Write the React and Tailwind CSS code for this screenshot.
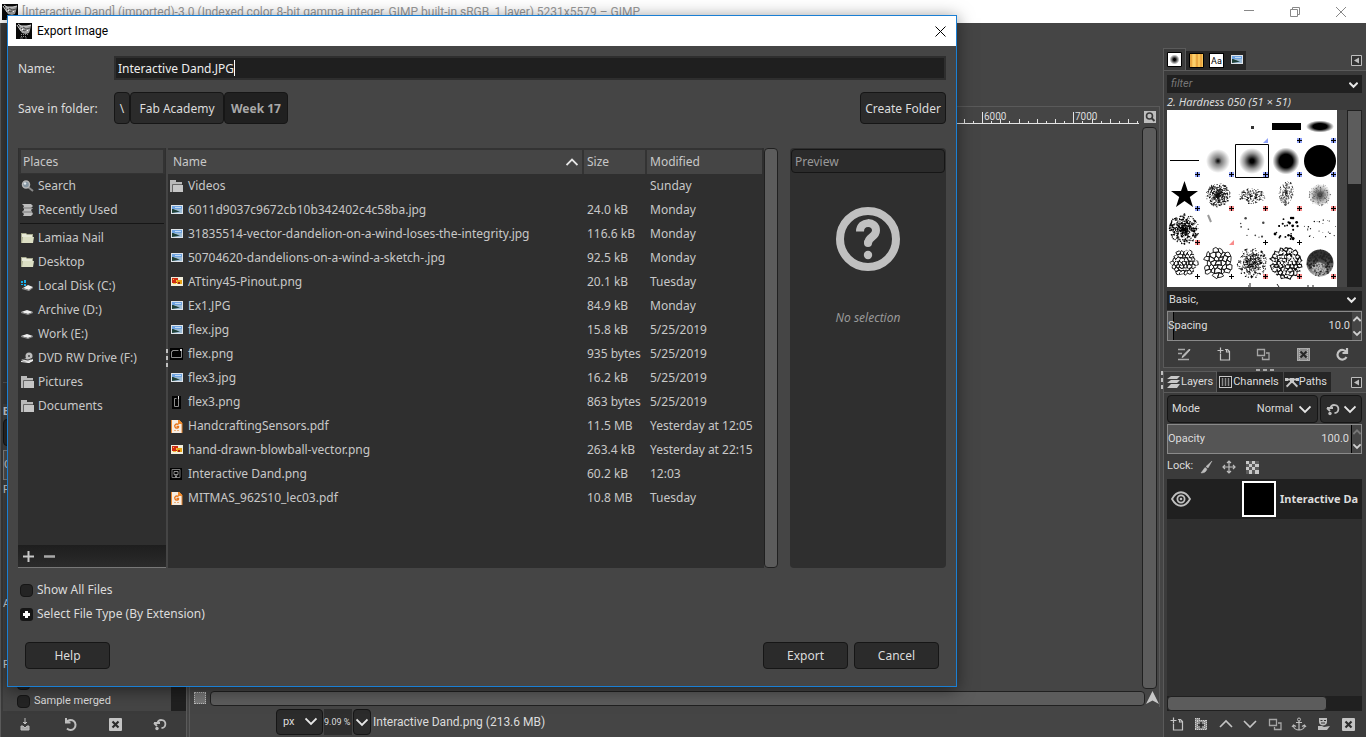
import React, { useState } from "react";

const places = [
  { name: "Search", icon: "search" },
  { name: "Recently Used", icon: "recent" },
  { name: "Lamiaa Nail", icon: "home", divider: true },
  { name: "Desktop", icon: "home" },
  { name: "Local Disk (C:)", icon: "system" },
  { name: "Archive (D:)", icon: "drive" },
  { name: "Work (E:)", icon: "drive" },
  { name: "DVD RW Drive (F:)", icon: "dvd" },
  { name: "Pictures", icon: "folder" },
  { name: "Documents", icon: "folder" },
];

const files = [
  { name: "Videos", size: "", modified: "Sunday", icon: "folder" },
  { name: "6011d9037c9672cb10b342402c4c58ba.jpg", size: "24.0 kB", modified: "Monday", icon: "jpg" },
  { name: "31835514-vector-dandelion-on-a-wind-loses-the-integrity.jpg", size: "116.6 kB", modified: "Monday", icon: "jpg" },
  { name: "50704620-dandelions-on-a-wind-a-sketch-.jpg", size: "92.5 kB", modified: "Monday", icon: "jpg" },
  { name: "ATtiny45-Pinout.png", size: "20.1 kB", modified: "Tuesday", icon: "png" },
  { name: "Ex1.JPG", size: "84.9 kB", modified: "Monday", icon: "jpg" },
  { name: "flex.jpg", size: "15.8 kB", modified: "5/25/2019", icon: "jpg" },
  { name: "flex.png", size: "935 bytes", modified: "5/25/2019", icon: "thumbWide" },
  { name: "flex3.jpg", size: "16.2 kB", modified: "5/25/2019", icon: "jpg" },
  { name: "flex3.png", size: "863 bytes", modified: "5/25/2019", icon: "thumbTall" },
  { name: "HandcraftingSensors.pdf", size: "11.5 MB", modified: "Yesterday at 12:05", icon: "pdf" },
  { name: "hand-drawn-blowball-vector.png", size: "263.4 kB", modified: "Yesterday at 22:15", icon: "png" },
  { name: "Interactive Dand.png", size: "60.2 kB", modified: "12:03", icon: "thumbDand" },
  { name: "MITMAS_962S10_lec03.pdf", size: "10.8 MB", modified: "Tuesday", icon: "pdf" },
];

const drawings = {
  search: (
    <>
      <path d="M7 7l5 4" stroke="#8a8a8a" strokeWidth="2" />
      <circle cx="5" cy="4.500" r="3.500" fill="#8494a0" stroke="#b4b4b4" strokeWidth="1.500" />
      <circle cx="4" cy="3.500" r="1.200" fill="#dfe6ea" />
    </>
  ),
  recent: (
    <>
      <path d="M1 0h9l2 2-2 2H2l1-2zM3 4h9l-2 2 1 2H1l2-2zM1 8h10l1 2-2 2H2l1-2z" fill="#bdbdbd" />
      <path d="M2 4h9M2 8h9" stroke="#777" />
    </>
  ),
  home: (
    <>
      <path d="M0 1h5l1 1h6v9H0z" fill="#a9ac90" />
      <path d="M1 2h4l1 1h5v2H1z" fill="#e8ead8" />
      <path d="M2 5h11l-1 6H1z" fill="#dcdfc4" />
    </>
  ),
  drive: (
    <>
      <path d="M0 8l6-2 6 2-5 2z" fill="#f0f0f0" />
      <path d="M0 8l7 2 5-2v1l-5 2-7-2z" fill="#8e8e8e" />
    </>
  ),
  system: (
    <>
      <path d="M2 8l5-3 5 2-4 3z" fill="#f0f0f0" />
      <path d="M1 8l7 2 4-3v1l-4 3-7-2z" fill="#9a9a9a" />
      <path d="M0 1h2v2H0zM3 0h2v3H3zM0 4h2v1H0zM3 4h2v2H3z" fill="#18aeea" />
    </>
  ),
  dvd: (
    <>
      <path d="M0 8l6-2 6 2-4 3z" fill="#dcdcdc" />
      <circle cx="8" cy="4" r="3.500" fill="#bdbdbd" />
      <circle cx="8" cy="4" r="1" fill="#444" />
      <path d="M2 7l5 1 5-2" stroke="#3a3a3a" fill="none" />
      <path d="M0 9l8 1 4-3v2l-4 2-8-1z" fill="#efefef" />
    </>
  ),
  folder: (
    <>
      <path d="M0 0h6v2h6v10H0z" fill="#b9b9b9" />
      <path d="M2.500 12V4.500H12" stroke="#666" fill="none" />
      <path d="M4 5h9v7H3V6z" fill="#c6c6c6" />
    </>
  ),
  jpg: (
    <>
      <path d="M1 1h12v9H1z" fill="#dfe4e9" />
      <path d="M2 2h10v3H2z" fill="#6fa4e2" />
      <path d="M5 3h6v1H5z" fill="#c4dcf5" />
      <path d="M2 5h10v4H2z" fill="#9cbbd6" />
      <path d="M2 5c3 0 4 2 8 2l-2 1-6 1z" fill="#1f4038" />
    </>
  ),
  png: (
    <>
      <path d="M1 1h12v9H1z" fill="#f2eedb" />
      <path d="M2 2h6v5H2z" fill="#cf2b14" />
      <path d="M7 4h5v4H7z" fill="#e8a315" />
      <path d="M3 3h1v1H3zM6 4h1v2H6zM3 7h3v1H3z" fill="#f3c23c" />
      <path d="M8 6h2v2H8z" fill="#9d2710" />
    </>
  ),
  thumbWide: (
    <>
      <path d="M0 0h13v12H0z" fill="#020202" />
      <path d="M11.500 1v8.500h-10v-6h1v-1h6" stroke="#8c8c8c" fill="none" />
      <path d="M10 1h2v2h-2z" fill="#d8d8d8" />
    </>
  ),
  thumbTall: (
    <>
      <path d="M2 0h9v13H2z" fill="#020202" />
      <path d="M8.500 1v9.500h-4v-8h2" stroke="#8c8c8c" fill="none" />
      <path d="M8 0h1v3H8z" fill="#ddd" />
    </>
  ),
  thumbDand: (
    <>
      <path d="M0 0h12v12H0z" fill="#020202" />
      <path d="M2 1.500h8v8H2z" stroke="#777" fill="none" />
      <path d="M4 3.500h4v3H4zM5 7l1 3 1-3" stroke="#8f8f8f" fill="none" />
    </>
  ),
  pdf: (
    <>
      <path d="M1 0h8l3 3v10H1z" fill="#f7ede2" />
      <path d="M1.500 0v13M9 0l3 3v10" stroke="#e4832c" fill="none" />
      <path d="M8 0h1l3 3v1H8z" fill="#ee8a2c" />
      <path d="M8.500 4.500C6 3 4 5 5 7s4 1 3.500-.500H6.500" stroke="#e8741a" strokeWidth="1.400" fill="none" />
      <path d="M4 10.500h6" stroke="#eeb077" strokeDasharray="2 1" />
    </>
  ),
};

function FileIcon({ name }) {
  return (
    <svg width="14" height="13" viewBox="0 0 14 13" className="shrink-0" aria-hidden="true">
      {drawings[name]}
    </svg>
  );
}

function Chevron({ up, size = 12, color = "#e6e6e6", className = "" }) {
  return (
    <svg width={size} height={size} viewBox="0 0 12 12" className={className} aria-hidden="true">
      <path
        d={up ? "M0.500 9L6 3.500 11.500 9" : "M0.500 3.500L6 9l5.500-5.500"}
        fill="none"
        stroke={color}
        strokeWidth={size < 10 ? 2.8 : 1.8}
      />
    </svg>
  );
}

function WilberIcon() {
  return (
    <svg width="16" height="16" viewBox="0 0 16 16" className="shrink-0" aria-hidden="true">
      <path d="M0 0h16v16H0z" fill="#080808" />
      <path d="M3 2l3 1 4 0 5-1-1 5-1 3-3 1-4-1-2-3z" fill="#a4a4a4" />
      <path d="M1 2l2 3 2 3M2 1l3 2h6l4-1" stroke="#d8d8d8" fill="none" />
      <path d="M5 5l3 3 2-1M7 4l3 2 4-1" stroke="#4a4a4a" fill="none" />
      <path d="M6 6h1v1H6zM11 7h1v1h-1z" fill="#fff" />
      <path d="M5 11.500h7M5 13.500h6" stroke="#8a8a8a" strokeDasharray="1 1" />
      <path d="M4 15h3M9 15h2" stroke="#666" />
    </svg>
  );
}

const glyphs = {
  save: <path d="M7 1v6M5 5l2 2 2-2M3 9v4h8V9H9L7 11 5 9z" fill="#a8a8a8" stroke="#bebebe" />,
  undo: <path d="M3 1v4.500h4.500M3.500 5A5 5 0 1 1 4 11.500" fill="none" stroke="#bebebe" strokeWidth="2" />,
  reset: (
    <>
      <path d="M4.500 6a4 4 0 1 1 4 5M1 6h6M4 9L1 6" fill="none" stroke="#bebebe" strokeWidth="1.800" />
      <circle cx="4" cy="11.500" r="1.700" fill="#bebebe" />
    </>
  ),
  remove: (
    <>
      <rect x="1" y="1" width="13" height="13" rx="1" fill="#c4c4c4" />
      <path d="M4.500 4.500l6 6M10.500 4.500l-6 6" stroke="#2c2c2c" strokeWidth="2.200" />
    </>
  ),
  removeDim: (
    <>
      <rect x="1" y="1" width="13" height="13" fill="#8c8c8c" />
      <rect x="1.500" y="1.500" width="12" height="12" fill="none" stroke="#c9c9c9" strokeDasharray="1 1" />
      <path d="M3.500 2v11M11.500 2v11" stroke="#b4b4b4" strokeDasharray="1 1" />
      <path d="M4.500 4.500l6 6M10.500 4.500l-6 6" stroke="#262626" strokeWidth="2" />
    </>
  ),
  edit: (
    <>
      <path d="M1 2.500h7M1 6.500h4M1 12.500h11" stroke="#a8a8a8" strokeWidth="1.500" />
      <path d="M12.500 2L6 8.500l-1 2 2-1L13 3z" fill="#bebebe" stroke="#bebebe" />
    </>
  ),
  newFile: <path d="M3.500 7v6h9V4.500l-2-2H8M0.500 3.500h6M3.500 0.500v6M9.500 2v3H12" fill="none" stroke="#c4c4c4" strokeWidth="1.200" />,
  group: (
    <>
      <path d="M1 1h5v2h7v10H1z" fill="#8f8f8f" />
      <path d="M1 1.500h5M1 3.500h12M1 12.500h12M1.500 1v12M12.500 3v10M3.500 4v8M10.500 4v8" stroke="#cfcfcf" strokeDasharray="1 1" />
      <path d="M7 5v6M4 8h6" stroke="#262626" strokeWidth="1.500" />
    </>
  ),
  duplicate: <path d="M1.500 2.500h7v6h-7zM10 6h3v6.500H6.500V10" fill="none" stroke="#a6a6a6" strokeWidth="1.300" />,
  refresh: <path d="M12 1v5H7.500M11.500 5.500A4.800 4.800 0 1 0 11.500 10" fill="none" stroke="#c4c4c4" strokeWidth="2.200" />,
  up: <path d="M1 10l6-6 6 6" fill="none" stroke="#c4c4c4" strokeWidth="1.600" />,
  down: <path d="M1 4l6 6 6-6" fill="none" stroke="#c4c4c4" strokeWidth="1.600" />,
  anchor: (
    <>
      <circle cx="7" cy="2.500" r="1.500" fill="none" stroke="#bebebe" />
      <path d="M7 4v9M4 5.500h6M1.500 8.500c0 3 3 4.500 5.500 4.500s5.500-1.500 5.500-4.500M0 10l1.500-2L4 9.500M14 10l-1.500-2L10 9.500" fill="none" stroke="#bebebe" strokeWidth="1.200" />
    </>
  ),
  mask: (
    <>
      <path d="M2 1h8v4c0 2-2 3.500-4 3.500S2 7 2 5z" fill="#bebebe" />
      <path d="M3.500 3.500h2M7 3.500h2M4 6h4" stroke="#333" />
      <path d="M1 9h4l2 1 6-1-3 4H1z" fill="#bebebe" />
    </>
  ),
  brush: <path d="M13 1L7 6.500 9 8zM6 7.500L2 13c3 0 5-1 6-4z" fill="#bebebe" stroke="#bebebe" strokeWidth="0.500" />,
  move: <path d="M7 1v12M1 7h12M5 3l2-2 2 2M5 11l2 2 2-2M3 5L1 7l2 2M11 5l2 2-2 2" fill="none" stroke="#bebebe" strokeWidth="1.200" />,
  checker: (
    <>
      <path d="M1 1h13v13H1z" fill="#5c5c5c" />
      <path d="M1 1h3v3H1zM7 1h3v3H7zM4 4h3v3H4zM10 4h4v3h-4zM1 7h3v3H1zM7 7h3v3H7zM4 10h3v4H4zM10 10h4v4h-4z" fill="#c8c8c8" />
    </>
  ),
  layers: <path d="M4 1h9l-3 3H0zM4 5h9l-3 3H0zM4 9h9l-3 4H0z" fill="#c8c8c8" />,
  channels: (
    <>
      <rect x="0.500" y="1.500" width="12" height="11" fill="#1c1c1c" stroke="#c8c8c8" />
      <path d="M3.500 3v8M6.500 3v8M9.500 3v8" stroke="#8a8a8a" strokeWidth="1.500" />
    </>
  ),
  paths: (
    <>
      <path d="M0 3h3v3H0zM5 3h4v4H5zM11 3h3v3h-3z" fill="#c8c8c8" />
      <path d="M2 4.500h10M1.500 11.500c2-1 2.500-3 5.500-5 3 2 3.500 4 5.500 5" fill="none" stroke="#c8c8c8" strokeWidth="2" />
    </>
  ),
};

function Glyph({ name }) {
  return (
    <svg width="14" height="14" viewBox="0 0 14 14" className="shrink-0 overflow-visible" aria-hidden="true">
      {glyphs[name]}
    </svg>
  );
}

function IconButton({ name, label }) {
  return (
    <button type="button" aria-label={label} className="flex h-5 w-5 items-center justify-center">
      <Glyph name={name} />
    </button>
  );
}

function MenuArrow({ label }) {
  return (
    <button type="button" aria-label={label} className="mr-1 mb-1 ml-auto">
      <svg width="11" height="11" viewBox="0 0 11 11" aria-hidden="true">
        <path d="M0.500 0.500h10v10h-10z" fill="#333" stroke="#bdbdbd" />
        <path d="M8 2.500v6L3 5.500z" fill="#bdbdbd" />
      </svg>
    </button>
  );
}

function Grip({ vertical }) {
  return (
    <span className={vertical ? "flex flex-col gap-[3px]" : "flex gap-[3px]"}>
      <i className={vertical ? "h-1 w-0.5 bg-[#c0c0c0]" : "h-0.5 w-1 bg-[#a8a8a8]"} />
      <i className={vertical ? "h-1 w-0.5 bg-[#c0c0c0]" : "h-0.5 w-1 bg-[#a8a8a8]"} />
      <i className={vertical ? "h-1 w-0.5 bg-[#c0c0c0]" : "h-0.5 w-1 bg-[#a8a8a8]"} />
    </span>
  );
}

// Repeatable noise, so the brush previews are the same on each render
function randomFrom(seed) {
  let s = seed * 7919;
  return () => {
    s = (s * 16807) % 2147483647;
    return s / 2147483647;
  };
}

function Scatter({ seed, count, spread = 13, size = 0.7, color = "#000", falloff = 0.8 }) {
  const next = randomFrom(seed);
  const dots = [];
  for (let i = 0; i < count; i++) {
    const angle = next() * Math.PI * 2;
    const dist = Math.pow(next(), falloff) * spread;
    dots.push(
      <circle key={i} cx={17 + Math.cos(angle) * dist} cy={17 + Math.sin(angle) * dist} r={size * (0.5 + next() * 0.6)} fill={color} />
    );
  }
  return dots;
}

// Honeycomb whose corners are pushed about, cut to a disc
function Cells({ seed, size = 2.8, width = 0.9, radius = 15 }) {
  const jitter = (x, y) => {
    const n = Math.sin(Math.round(x * 3) * 12.9 + Math.round(y * 3) * 78.2 + seed) * 43758.5;
    return (n - Math.floor(n) - 0.5) * size * 0.9;
  };
  const hexes = [];
  for (let row = -4; row <= 4; row++) {
    for (let col = -4; col <= 4; col++) {
      const cx = 17 + (col + (row % 2 ? 0.5 : 0)) * size * 1.732;
      const cy = 17 + row * size * 1.5;
      if (Math.hypot(cx - 17, cy - 17) > radius - 1) continue;
      const points = [0, 1, 2, 3, 4, 5].map((k) => {
        const x = cx + Math.sin((k * Math.PI) / 3) * size;
        const y = cy + Math.cos((k * Math.PI) / 3) * size;
        return `${x + jitter(x, y)},${y + jitter(y, x)}`;
      });
      hexes.push(<polygon key={`${row}:${col}`} points={points.join(" ")} fill="none" stroke="#111" strokeWidth={width} />);
    }
  }
  return hexes;
}

const brushes = [
  [null, null],
  [null, null],
  [<path d="M16 16h3v3h-3z" fill="#333" />, "blueCorner"],
  [<path d="M3 13h29v7H3z" fill="#000" />, "blue"],
  [<ellipse cx="17" cy="16.500" rx="14" ry="6" fill="url(#hard)" />, "blue"],
  [<path d="M3 16.500h29" stroke="#000" />, "blue"],
  [<circle cx="17" cy="17" r="12" fill="url(#soft)" />, "blue"],
  [<circle cx="17" cy="17" r="13" fill="url(#mid)" />, "blue"],
  [<circle cx="17" cy="17" r="13.500" fill="url(#hard)" />, "blue"],
  [<circle cx="17" cy="17" r="16" fill="#000" />, "blue"],
  [<path d="M17.500 3l3.300 10H31l-8.200 6 3.200 10-8.500-6L9 29l3.200-10L4 13h10z" fill="#000" />, "blue"],
  [<Scatter seed={1117} count={420} spread={12} size={0.7} color="#111" falloff={1} />, "red"],
  [<g transform="translate(0 8) scale(1 .600)"><Scatter seed={3109} count={190} spread={13} size={0.8} /></g>, "red"],
  [<g transform="translate(10 -4) rotate(10) scale(.600 1.050)"><Scatter seed={6733} count={210} spread={12} color="#222" /></g>, "red"],
  [<><circle cx="17" cy="17" r="11" fill="url(#soft)" /><Scatter seed={8311} count={220} spread={11} size={0.5} color="#555" /></>, "red"],
  [<Scatter seed={9743} count={440} spread={15} size={0.8} falloff={0.9} />, "red"],
  [<path d="M7 3l3 7" stroke="#999" strokeWidth="2" />, "redCorner"],
  [<Scatter seed={13127} count={9} spread={13} size={1.2} color="#444" falloff={0.5} />, "plain"],
  [<Scatter seed={15121} count={28} spread={14} size={1.4} falloff={0.6} />, "plain"],
  [<Scatter seed={17321} count={24} spread={16} size={0.7} falloff={0.5} />, null],
  [<><Cells seed={193} size={2.2} radius={13} width={1} /><Scatter seed={4001} count={110} spread={15} color="#fff" falloff={0.5} /></>, "plain"],
  [<Cells seed={211} size={2.7} />, "plain"],
  [<><Scatter seed={23333} count={300} spread={15} size={0.7} falloff={0.6} /><Cells seed={19} size={2} radius={10} width={0.5} /></>, "red"],
  [<><Cells seed={257} size={2.2} width={1.1} /><Scatter seed={26111} count={130} spread={15} size={0.9} color="#fff" falloff={0.5} /></>, "red"],
  [
    <>
      <circle cx="17" cy="17" r="13.500" fill="url(#moon)" />
      <Scatter seed={28349} count={120} spread={13} size={1} falloff={0.5} color="#222" />
      <g transform="translate(-1 6)"><Scatter seed={9011} count={70} spread={7} size={0.9} color="#bbb" /></g>
    </>,
    "red",
  ],
];

function BrushMark({ kind }) {
  if (!kind) return null;
  const color = kind.startsWith("blue") ? "#8fa2f8" : kind.startsWith("red") ? "#f98c8c" : "#fff";
  if (kind.endsWith("Corner")) return <path d="M33 28v5h-5z" fill={color} />;
  return (
    <>
      <path d="M28 28h5v5h-5z" fill={color} />
      <path d="M30.500 28v5M28 30.500h5" stroke="#000" />
    </>
  );
}

function BrushGrid() {
  return (
    <svg width="170" height="177" viewBox="0 0 170 177" className="shrink-0 bg-white" role="img" aria-label="Brushes">
      <defs>
        <radialGradient id="soft">
          <stop offset="0" stopColor="#000" />
          <stop offset="0.300" stopColor="#000" stopOpacity="0.500" />
          <stop offset="1" stopColor="#000" stopOpacity="0" />
        </radialGradient>
        <radialGradient id="mid">
          <stop offset="0.150" stopColor="#000" />
          <stop offset="0.600" stopColor="#000" stopOpacity="0.400" />
          <stop offset="1" stopColor="#000" stopOpacity="0" />
        </radialGradient>
        <radialGradient id="hard">
          <stop offset="0.500" stopColor="#000" />
          <stop offset="1" stopColor="#000" stopOpacity="0" />
        </radialGradient>
        <linearGradient id="moon" x1="0" y1="0" x2="0" y2="1">
          <stop offset="0.300" stopColor="#333" />
          <stop offset="1" stopColor="#aaa" />
        </linearGradient>
      </defs>
      {brushes.map(([shape, mark], i) => (
        <g key={i} transform={`translate(${(i % 5) * 34} ${Math.floor(i / 5) * 34})`}>
          {shape}
          <BrushMark kind={mark} />
        </g>
      ))}
      <path d="M68.500 34.500h33v33h-33z" fill="none" stroke="#000" />
      <path d="M82 174h2M81 176h3M110 174l2 3M140 176h2M145 176h2" stroke="#222" />
    </svg>
  );
}

function Ruler() {
  const ticks = [];
  for (let i = -6; i < 18; i++) {
    const x = Math.round(62 + i * 9.13) + 0.5;
    const length = i % 10 === 0 ? 12 : i % 2 === 0 ? 5 : 3;
    ticks.push(<path key={i} d={`M${x} ${16 - length}V16`} stroke="#e4e4e4" />);
  }
  return (
    <svg width="219" height="18" viewBox="0 0 219 18" className="shrink-0" aria-hidden="true">
      {ticks}
      <path d="M0 15.500h219" stroke="#e4e4e4" />
      <text x="64" y="12" fontSize="10" fill="#dcdcdc" className="font-['Roboto',sans-serif]">6000</text>
      <text x="155" y="12" fontSize="10" fill="#dcdcdc" className="font-['Roboto',sans-serif]">7000</text>
    </svg>
  );
}

function SpinBox({ id, label, value, children, fill = "", upColor }) {
  return (
    <div className="flex h-[30px] border border-[#8a8a8a] bg-[#2e2e2e]">
      <div className={`relative flex min-w-0 flex-1 items-center pt-px ${fill}`}>
        {children}
        <label htmlFor={id} className="relative flex-1">{label}</label>
        <input id={id} defaultValue={value} className="relative w-10 bg-transparent pr-0.5 text-right" />
      </div>
      <div className="flex w-[9px] flex-col items-center justify-between bg-[#454545] py-[3px]">
        <button type="button" aria-label={`Increase ${label}`}><Chevron up size={8} color={upColor} /></button>
        <button type="button" aria-label={`Decrease ${label}`}><Chevron size={8} color="#d0d0d0" /></button>
      </div>
    </div>
  );
}

const smallCheck = "m-0 size-[13px] appearance-none rounded-sm border border-[#161616] bg-[#242424]";

function LeftDock() {
  return (
    <aside className="flex w-[187px] shrink-0 flex-col border-x border-[#5a5a5a] bg-[#3b3b3b] pl-0.5 font-['Roboto',sans-serif] text-[11px]">
      <div className="h-[359px] shrink-0" />
      <div className="flex min-h-0 flex-1">
        <div className="flex min-w-0 flex-1 flex-col overflow-hidden border-t border-[#5a5a5a] bg-[#454545]">
          <div className="h-[21px] shrink-0 bg-[#3b3b3b]" />
          <h2 className="h-[15px] shrink-0 leading-4 font-bold">B</h2>
          <div className="h-[27px] shrink-0 rounded border border-[#161616] bg-[#2b2b2b]" />
          <div className="mt-1 flex h-[30px] shrink-0 items-center border border-[#8a8a8a] bg-[#555]">O</div>
          <p className="h-5 shrink-0 leading-5">F</p>
          <div className="h-[94px] shrink-0" />
          <p className="h-5 shrink-0 leading-5">A</p>
          <div className="flex-1" />
          <p className="h-5 shrink-0 leading-5">F</p>
          <div className="flex h-4 shrink-0 items-center pl-3.5">
            <input type="checkbox" aria-label="Fill transparent areas" className={smallCheck} />
          </div>
          <label className="flex h-5 shrink-0 items-center gap-1 pt-px pl-3.5">
            <input type="checkbox" className={smallCheck} />
            Sample merged
          </label>
        </div>
        <div className="w-[15px] bg-[#202020]" />
      </div>
      <div className="flex h-[26px] shrink-0 items-center justify-around pr-1">
        <IconButton name="save" label="Save tool preset" />
        <IconButton name="undo" label="Restore tool preset" />
        <IconButton name="remove" label="Delete tool preset" />
        <IconButton name="reset" label="Reset to default values" />
      </div>
    </aside>
  );
}

function ImageWindow() {
  return (
    <main className="ml-0.5 flex min-w-0 flex-1 flex-col border-l border-[#5a5a5a] bg-[#454545]">
      <div className="h-[83px] shrink-0" />
      <div className="flex min-h-0 flex-1 flex-col border-t border-r border-[#5a5a5a]">
        <div className="flex h-5 shrink-0 items-center justify-end gap-[5px] overflow-hidden pr-[3px]">
          <Ruler />
          <button type="button" aria-label="Zoom image when window size changes">
            <svg width="12" height="12" viewBox="0 0 12 12" aria-hidden="true">
              <path d="M0 0h12v12H0z" fill="#bebebe" />
              <circle cx="5.500" cy="5" r="3" fill="none" stroke="#3a3a3a" strokeWidth="1.600" />
              <path d="M7.500 7l3 3" stroke="#3a3a3a" strokeWidth="2" />
            </svg>
          </button>
        </div>
        <div className="flex min-h-0 flex-1 justify-end pr-0.5">
          <div className="w-[15px] rounded-sm border border-[#202020] bg-[#5c5c5c]" />
        </div>
        <div className="flex h-[18px] shrink-0 items-center gap-px pl-1">
          <button type="button" aria-label="Toggle quick mask" className="size-3 shrink-0 border border-dotted border-[#bdbdbd] bg-[#777]" />
          <div className="ml-[3px] h-[15px] flex-1 rounded-sm border border-[#202020] bg-[#5c5c5c]" />
          <button type="button" aria-label="Navigate the image">
            <svg width="13" height="14" viewBox="0 0 13 14" aria-hidden="true">
              <path d="M6.500 0L13 13 6.500 9.500 0 13z" fill="#c8c8c8" />
            </svg>
          </button>
        </div>
      </div>
      <footer className="flex h-[30px] shrink-0 items-center gap-px pl-[86px] font-['Roboto',sans-serif]">
        <div className="relative">
          <select aria-label="Unit" className="h-[26px] w-[47px] appearance-none rounded border border-[#161616] bg-[#2b2b2b] pl-1.5 text-[11px]">
            <option>px</option>
          </select>
          <Chevron className="pointer-events-none absolute top-1.5 right-1.5" />
        </div>
        <input aria-label="Zoom" defaultValue="9.09 %" className="h-[26px] w-7 bg-[#2e2e2e] text-[9px]" />
        <button type="button" aria-label="Zoom presets" className="flex h-[26px] w-[18px] items-center justify-center rounded border border-[#161616] bg-[#2b2b2b]">
          <Chevron />
        </button>
        <span className="ml-px">Interactive Dand.png (213.6 MB)</span>
      </footer>
    </main>
  );
}

function RightDock() {
  return (
    <aside className="flex w-[203px] shrink-0 flex-col bg-[#3b3b3b] font-['Roboto',sans-serif] text-[11px]">
      <div className="h-[26px] shrink-0 bg-[#454545]" />
      <div className="flex h-[22px] shrink-0 items-end border-b border-[#5a5a5a] bg-[#454545]">
        <button type="button" aria-label="Brushes" className="flex h-[22px] w-[23px] items-center justify-center border border-b-0 border-[#5a5a5a] bg-[#3b3b3b]">
          <svg width="15" height="15" viewBox="0 0 15 15" aria-hidden="true">
            <defs>
              <radialGradient id="tabBrush"><stop offset="0.200" /><stop offset="1" stopOpacity="0" /></radialGradient>
            </defs>
            <path d="M0.500 0.500h14v14h-14z" fill="#fff" stroke="#000" />
            <circle cx="7.500" cy="7.500" r="5" fill="url(#tabBrush)" />
          </svg>
        </button>
        <button type="button" aria-label="Patterns" className="flex h-[19px] w-5 items-center justify-center bg-[#262626]">
          <svg width="15" height="15" viewBox="0 0 15 15" aria-hidden="true">
            <path d="M0.500 0.500h14v14h-14z" fill="#f9c65a" stroke="#000" />
            <path d="M2 1v13M8 1v13M12 1v13" stroke="#d9882a" />
            <path d="M5 1v13" stroke="#ffda80" />
          </svg>
        </button>
        <button type="button" aria-label="Fonts" className="flex h-[19px] w-[21px] items-center justify-center bg-[#262626]">
          <span className="flex size-[15px] items-center justify-center border border-black bg-white text-[9px] leading-3 text-black">Aa</span>
        </button>
        <button type="button" aria-label="Images" className="flex h-[19px] w-[19px] items-center justify-center bg-[#262626]">
          <FileIcon name="jpg" />
        </button>
        <MenuArrow label="Configure brushes tab" />
      </div>

      <div className="flex shrink-0 flex-col border-l border-[#5a5a5a] pr-1 pl-[3px]">
        <div className="mt-1 flex h-[18px] items-center bg-[#202020] px-1">
          <input aria-label="Filter brushes" placeholder="filter" className="min-w-0 flex-1 bg-transparent italic placeholder:text-[#777]" />
          <Chevron size={9} />
        </div>
        <p className="h-[17px] pt-px font-['Noto_Sans',sans-serif] leading-4 italic">2. Hardness 050 (51 × 51)</p>
        <div className="flex">
          <BrushGrid />
          <div className="flex-1 bg-[#454545]" />
          <div className="w-[15px] bg-[#202020]">
            <div className="h-[75px] border border-[#202020] bg-[#5c5c5c]" />
          </div>
        </div>
        <div className="relative mt-1">
          <select aria-label="Brush tag" className="h-[19px] w-full appearance-none bg-[#202020] px-0.5">
            <option>Basic,</option>
          </select>
          <Chevron size={9} className="pointer-events-none absolute top-1 right-1.5" />
        </div>
        <div className="mt-px">
          <SpinBox id="spacing" label="Spacing" value="10.0" upColor="#d0d0d0">
            <span className="absolute inset-y-0 left-0 w-1.5 border-r border-black bg-[#555]" />
          </SpinBox>
        </div>
        <div className="flex h-[26px] items-center justify-between pr-2.5 pl-[7px]">
          <IconButton name="edit" label="Edit this brush" />
          <IconButton name="newFile" label="Create a new brush" />
          <IconButton name="duplicate" label="Duplicate this brush" />
          <IconButton name="removeDim" label="Delete this brush" />
          <IconButton name="refresh" label="Refresh brushes" />
        </div>
      </div>

      <div className="flex h-[5px] shrink-0 items-center justify-center border-t border-[#5a5a5a] bg-[#454545]">
        <Grip />
      </div>

      <div className="flex h-[21px] shrink-0 items-end border-b border-[#5a5a5a] bg-[#454545]">
        <button type="button" className="flex h-[21px] items-center border border-b-0 border-[#5a5a5a] bg-[#3b3b3b] px-[3px]">
          <Glyph name="layers" />Layers
        </button>
        <button type="button" className="flex h-5 items-center border-r border-[#454545] bg-[#262626] pr-1 pl-0.5">
          <Glyph name="channels" />Channels
        </button>
        <button type="button" className="flex h-5 items-center bg-[#262626] pr-1 pl-px">
          <Glyph name="paths" />Paths
        </button>
        <MenuArrow label="Configure layers tab" />
      </div>

      <div className="flex min-h-0 flex-1 flex-col border-l border-[#5a5a5a] pt-0.5 pr-1 pl-[3px]">
        <div className="flex shrink-0 gap-0.5">
          <label className="relative flex h-7 flex-1 items-center rounded border border-[#161616] bg-[#2b2b2b] pl-1">
            Mode
            <select className="min-w-0 flex-1 appearance-none bg-transparent pr-6 text-right [text-align-last:right]">
              <option>Normal</option>
            </select>
            <Chevron className="pointer-events-none absolute right-1.5" />
          </label>
          <button type="button" aria-label="Switch mode group" className="flex h-7 w-[42px] items-center justify-center gap-1 rounded border border-[#161616] bg-[#2b2b2b]">
            <Glyph name="reset" /><Chevron />
          </button>
        </div>
        <div className="mt-px shrink-0">
          <SpinBox id="opacity" label="Opacity" value="100.0" fill="bg-[#555] border-r border-black" upColor="#777" />
        </div>
        <div className="flex h-[25px] shrink-0 items-center gap-[3px]">
          <span>Lock:</span>
          <IconButton name="brush" label="Lock pixels" />
          <IconButton name="move" label="Lock position and size" />
          <IconButton name="checker" label="Lock alpha channel" />
        </div>
        <div className="flex min-h-0 flex-1 flex-col bg-[#2f2f2f]">
          <div className="flex h-10 items-center overflow-hidden bg-[#202020] pl-1">
            <svg width="20" height="16" viewBox="0 0 20 16" className="shrink-0" role="img" aria-label="Visible">
              <path d="M1 8c5-9 13-9 18 0-5 9-13 9-18 0z" fill="none" stroke="#c0c0c0" strokeWidth="1.800" />
              <circle cx="10" cy="8" r="3.600" fill="none" stroke="#c0c0c0" strokeWidth="1.800" />
              <circle cx="10" cy="8" r="1.300" fill="#c0c0c0" />
            </svg>
            <div className="ml-[51px] h-9 w-[34px] shrink-0 border-2 border-white bg-black" />
            <span className="ml-1 font-['Noto_Sans',sans-serif] font-bold whitespace-nowrap">Interactive Da</span>
          </div>
        </div>
        <div className="h-[15px] shrink-0 bg-[#202020]">
          <div className="h-[15px] w-[82%] rounded-sm border border-[#202020] bg-[#5c5c5c]" />
        </div>
        <div className="flex h-[26px] shrink-0 items-center justify-between pr-1">
          <IconButton name="newFile" label="New layer" />
          <IconButton name="group" label="New layer group" />
          <IconButton name="up" label="Raise layer" />
          <IconButton name="down" label="Lower layer" />
          <IconButton name="duplicate" label="Duplicate layer" />
          <IconButton name="anchor" label="Anchor layer" />
          <IconButton name="mask" label="Add mask" />
          <IconButton name="remove" label="Delete layer" />
        </div>
      </div>
    </aside>
  );
}

function PlacesPanel() {
  return (
    <div className="flex w-[148px] shrink-0 flex-col border-b border-[#777] bg-[#2f2f2f]">
      <h2 className="mx-px flex h-[26px] items-center border-2 border-b border-[#333] bg-[#454545] px-0.5">Places</h2>
      <ul className="flex-1">
        {places.map((p) => (
          <li key={p.name}>
            {p.divider && <div className="mx-0.5 mt-px mb-0.5 h-px bg-[#161616]" />}
            <button type="button" className="flex h-6 w-full items-center gap-[3px] pl-[3px]">
              <FileIcon name={p.icon} />{p.name}
            </button>
          </li>
        ))}
      </ul>
      <div className="flex h-[22px] items-center gap-2 bg-linear-to-b from-[#1e1e1e] to-[#2b2b2b] pl-1">
        <button type="button" aria-label="Add bookmark">
          <svg width="13" height="12" viewBox="0 0 13 12" aria-hidden="true"><path d="M6.500 1v11M1 6.500h11" stroke="#c8c8c8" strokeWidth="2" /></svg>
        </button>
        <button type="button" aria-label="Remove bookmark">
          <svg width="13" height="12" viewBox="0 0 13 12" aria-hidden="true"><path d="M1 6.500h11" stroke="#a8a8a8" strokeWidth="2.500" /></svg>
        </button>
      </div>
    </div>
  );
}

function FileTable() {
  return (
    <div className="min-w-0 flex-1 overflow-hidden bg-[#2f2f2f] pr-0.5">
      <table className="w-full table-fixed border-collapse text-left">
        <thead>
          <tr className="h-[25px] border-t-2 border-[#333] bg-[#454545]">
            <th className="pl-[5px] font-normal">
              <div className="flex items-center justify-between pr-1">Name<Chevron up /></div>
            </th>
            <th className="w-[63px] border-l-2 border-[#333] pl-[3px] font-normal">Size</th>
            <th className="w-[116px] border-l-2 border-[#333] pl-[3px] font-normal">Modified</th>
          </tr>
        </thead>
        <tbody>
          {files.map((f) => (
            <tr key={f.name} className="h-6 whitespace-nowrap">
              <td className="pl-0.5">
                <div className="flex items-center gap-1"><FileIcon name={f.icon} />{f.name}</div>
              </td>
              <td className="pl-1">{f.size}</td>
              <td className="pl-1">{f.modified}</td>
            </tr>
          ))}
        </tbody>
      </table>
    </div>
  );
}

const pathButton = "h-8 rounded border border-[#161616] bg-[#2b2b2b]";
const actionButton = "h-[27px] w-[85px] rounded border border-[#161616] bg-[#2b2b2b]";

function ExportDialog() {
  const [name, setName] = useState("Interactive Dand.JPG");
  const [showAll, setShowAll] = useState(false);

  return (
    <div
      role="dialog"
      aria-label="Export Image"
      className="absolute top-[15px] right-[409px] bottom-[50px] left-[7px] flex flex-col border border-[#1a7fd4] bg-[#454545] shadow-[0_3px_16px_rgba(0,0,0,0.5)]"
    >
      <header className="flex h-[30px] shrink-0 items-center gap-[5px] bg-white px-2 font-['Roboto',sans-serif] text-black">
        <WilberIcon />
        <h1 className="flex-1">Export Image</h1>
        <button type="button" aria-label="Close" className="pr-0.5">
          <svg width="11" height="11" viewBox="0 0 11 11" aria-hidden="true"><path d="M0.500 0.500l10 10M10.500 0.500l-10 10" stroke="#000" /></svg>
        </button>
      </header>

      <form onSubmit={(e) => e.preventDefault()} className="flex min-h-0 flex-1 flex-col p-2.5 pb-[17px]">
        <div className="flex shrink-0 items-center">
          <label htmlFor="name" className="w-24 pt-0.5">Name:</label>
          <div className="flex h-6 flex-1 items-center border-2 border-[#2e2e2e] bg-[#1f1f1f] px-0.5">
            <input
              id="name"
              value={name}
              onChange={(e) => setName(e.target.value)}
              className="field-sizing-content bg-transparent pt-0.5 text-[#eee]"
            />
            <span className="h-4 w-px bg-white" />
          </div>
        </div>

        <div className="mt-3 flex shrink-0 items-center">
          <span className="w-24 pt-0.5">Save in folder:</span>
          <button type="button" className={`${pathButton} w-4 pt-0.5`}>\</button>
          <button type="button" className={`${pathButton} w-[94px] pt-0.5`}>Fab Academy</button>
          <button type="button" className="h-8 w-16 rounded border border-[#161616] bg-[#202020] pt-0.5 font-bold text-[#a8a8a8]">Week 17</button>
          <button type="button" className={`${pathButton} ml-auto w-[86px] pt-0.5 whitespace-nowrap`}>Create Folder</button>
        </div>

        <div className="mt-6 flex min-h-0 flex-1 text-[#c8c8c8]">
          <PlacesPanel />
          <div className="flex w-0.5 items-center justify-center"><Grip vertical /></div>
          <FileTable />
          <div className="w-[14px] rounded-sm border border-[#202020] bg-[#5c5c5c]" />
          <section className="ml-3 flex w-[156px] flex-col items-center rounded-sm bg-[#2f2f2f] text-[#999]">
            <h2 className="mt-px flex h-6 w-[154px] items-center rounded border border-[#161616] bg-[#2b2b2b] px-[3px] pt-0.5">Preview</h2>
            <svg width="64" height="64" viewBox="0 0 64 64" className="mt-[34px]" aria-hidden="true">
              <circle cx="32" cy="32" r="28" fill="none" stroke="#c0c0c0" strokeWidth="8" />
              <path d="M24 24.500c0-11 16-11 16-1 0 7-8 6-8 13" fill="none" stroke="#c0c0c0" strokeWidth="8" />
              <circle cx="32" cy="36" r="4" fill="#c0c0c0" />
              <circle cx="32" cy="48" r="4.200" fill="#c0c0c0" />
            </svg>
            <p className="mt-[39px] italic">No selection</p>
          </section>
        </div>

        <div className="mt-2.5 flex shrink-0 flex-col items-start">
          <label className="flex h-6 items-center gap-1 pl-0.5">
            <input
              type="checkbox"
              checked={showAll}
              onChange={(e) => setShowAll(e.target.checked)}
              className="size-[13px] appearance-none rounded-sm border border-[#161616] bg-[#242424] checked:bg-white"
            />
            Show All Files
          </label>
          <button type="button" className="flex h-6 items-center gap-1 pl-0.5">
            <svg width="13" height="13" viewBox="0 0 13 13" aria-hidden="true">
              <rect width="13" height="13" rx="3" fill="#161616" />
              <path d="M6.500 3v7M3 6.500h7" stroke="#fff" strokeWidth="3" />
            </svg>
            Select File Type (By Extension)
          </button>
        </div>

        <div className="mt-4 flex shrink-0 gap-1.5 px-[7px]">
          <button type="button" className={`${actionButton} mr-auto`}>Help</button>
          <button type="submit" className={actionButton}>Export</button>
          <button type="button" className={actionButton}>Cancel</button>
        </div>
      </form>
    </div>
  );
}

export default function App() {
  return (
    <div className="relative flex h-screen flex-col overflow-hidden bg-[#454545] font-['Noto_Sans',sans-serif] text-xs text-[#dcdcdc]">
      <header className="flex h-[23px] shrink-0 items-center gap-1 bg-white pl-0.5 font-['Roboto',sans-serif] text-[#999]">
        <WilberIcon />
        <span className="flex-1">[Interactive Dand] (imported)-3.0 (Indexed color 8-bit gamma integer, GIMP built-in sRGB, 1 layer) 5231x5579 – GIMP</span>
        <div className="flex items-center gap-9 pr-5">
          <button type="button" aria-label="Minimize">
            <svg width="10" height="10" viewBox="0 0 10 10" aria-hidden="true"><path d="M0 3.500h10" stroke="#888" /></svg>
          </button>
          <button type="button" aria-label="Restore">
            <svg width="10" height="10" viewBox="0 0 10 10" aria-hidden="true"><path d="M0.500 2.500h7v7h-7zM2.500 2.500v-2h7v7h-2" fill="none" stroke="#888" /></svg>
          </button>
          <button type="button" aria-label="Close window">
            <svg width="10" height="10" viewBox="0 0 10 10" aria-hidden="true"><path d="M0 0l10 10M10 0L0 10" stroke="#888" /></svg>
          </button>
        </div>
      </header>
      <div className="flex min-h-0 flex-1">
        <LeftDock />
        <ImageWindow />
        <div className="flex w-[3px] flex-col items-center justify-center"><Grip vertical /></div>
        <RightDock />
      </div>
      <ExportDialog />
    </div>
  );
}
